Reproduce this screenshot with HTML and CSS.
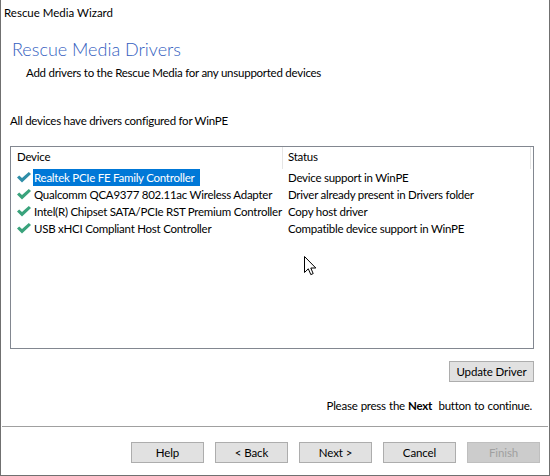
FILE: index.html
```html
<!DOCTYPE html>
<html>
<head>
<meta charset="utf-8">
<link rel="stylesheet" href="styles.css">
</head>
<body>
<div class="window">
  <div class="titlebar">Rescue Media Wizard</div>
  <h1 class="heading">Rescue Media Drivers</h1>
  <div class="subtitle">Add drivers to the Rescue Media for any unsupported devices</div>
  <div class="summary">All devices have drivers configured for WinPE</div>

  <div class="listbox">
    <div class="list-head">
      <div class="col-device">Device</div>
      <div class="col-status">Status</div>
      <div class="col-rest"></div>
    </div>
    <div class="row selected">
      <div class="col-device"><svg class="check" viewBox="0 0 14 11"><path d="M0 5.5 L2.2 3.4 L5 6 L11.8 0 L14 2.1 L5 10.5 Z"/></svg><span class="name">Realtek PCIe FE Family Controller</span></div>
      <div class="col-status">Device support in WinPE</div>
    </div>
    <div class="row">
      <div class="col-device"><svg class="check" viewBox="0 0 14 11"><path d="M0 5.5 L2.2 3.4 L5 6 L11.8 0 L14 2.1 L5 10.5 Z"/></svg><span class="name">Qualcomm QCA9377 802.11ac Wireless Adapter</span></div>
      <div class="col-status">Driver already present in Drivers folder</div>
    </div>
    <div class="row">
      <div class="col-device"><svg class="check" viewBox="0 0 14 11"><path d="M0 5.5 L2.2 3.4 L5 6 L11.8 0 L14 2.1 L5 10.5 Z"/></svg><span class="name">Intel(R) Chipset SATA/PCIe RST Premium Controller</span></div>
      <div class="col-status">Copy host driver</div>
    </div>
    <div class="row">
      <div class="col-device"><svg class="check" viewBox="0 0 14 11"><path d="M0 5.5 L2.2 3.4 L5 6 L11.8 0 L14 2.1 L5 10.5 Z"/></svg><span class="name">USB xHCI Compliant Host Controller</span></div>
      <div class="col-status">Compatible device support in WinPE</div>
    </div>
  </div>

  <div class="update-row"><button class="btn btn-update">Update Driver</button></div>
  <div class="hint">Please press the <b>Next</b>&nbsp; button to continue.</div>
  <div class="separator"></div>
  <div class="buttons">
    <button class="btn">Help</button>
    <button class="btn">&lt; Back</button>
    <button class="btn">Next &gt;</button>
    <button class="btn">Cancel</button>
    <button class="btn disabled">Finish</button>
  </div>

  <svg class="cursor" viewBox="0 0 13 20" width="13" height="20"><path d="M0.5 0.5 L0.5 16.5 L4.3 12.8 L6.8 18.6 L9.2 17.6 L6.8 12 L11.8 12 Z" fill="#fff" stroke="#000" stroke-width="1"/></svg>
</div>
</body>
</html>
```
FILE: styles.css
```css
* { box-sizing: border-box; }
html, body { margin: 0; padding: 0; background: #fff; }
body {
  width: 550px;
  height: 476px;
  overflow: hidden;
  font-family: Lato, "Noto Sans", sans-serif;
  font-size: 11.5px;
  letter-spacing: -0.25px;
  color: #000;
}
.window {
  position: relative;
  width: 550px;
  height: 476px;
  border-left: 1px solid #707070;
  border-right: 1px solid #707070;
  border-bottom: 1px solid #707070;
  display: flex;
  flex-direction: column;
}
.titlebar {
  margin-top: 5px;
  padding-left: 3px;
  line-height: 16px;
  height: 16px;
  letter-spacing: 0;
}
.heading {
  margin: 17px 0 0 11px;
  font-weight: 300;
  font-size: 18px;
  letter-spacing: 0;
  line-height: 22px;
  color: #3460c0;
}
.subtitle {
  margin-top: 5px;
  padding-left: 25px;
  line-height: 16px;
}
.summary {
  margin-top: 32px;
  padding-left: 9px;
  line-height: 16px;
}
.listbox {
  margin: 17px 0 0 9px;
  width: 524px;
  height: 203px;
  border: 1px solid #828790;
  background: #fff;
}
.list-head {
  display: flex;
  height: 22px;
  align-items: stretch;
}
.list-head > div {
  line-height: 20px;
}
.list-head .col-device {
  width: 272px;
  padding-left: 6px;
  border-right: 1px solid #e5e5e5;
}
.list-head .col-status {
  width: 248px;
  padding-left: 5px;
  border-right: 1px solid #e5e5e5;
}
.list-head .col-rest { flex: 1; }
.row {
  display: flex;
  height: 17px;
  line-height: 17px;
  white-space: nowrap;
}
.row .col-device {
  width: 273px;
  flex: none;
  padding-left: 6px;
  display: flex;
  align-items: center;
  overflow: hidden;
}
.row .col-status {
  padding-left: 4px;
}
.check {
  width: 14px;
  height: 11px;
  fill: #3aa37c;
  flex: none;
  margin-right: 2px;
}
.row.selected .check { fill: #2f8ea8; }
.name { padding: 0 1px; }
.row.selected .name {
  background: #0078d7;
  color: #fff;
  padding-right: 6px;
}
.update-row {
  margin-top: 12px;
  display: flex;
  justify-content: flex-end;
  padding-right: 15px;
}
.btn {
  font-family: inherit;
  font-size: 11.5px;
  letter-spacing: -0.1px;
  color: #000;
  background: #e1e1e1;
  border: 1px solid #adadad;
  width: 73px;
  height: 21px;
  padding: 0;
  margin: 0;
  line-height: 19px;
}
.btn-update { width: 85px; }
.btn.disabled {
  color: #a0a0a0;
  background: #cccccc;
  border-color: #bfbfbf;
}
.hint {
  margin-top: 16px;
  text-align: right;
  padding-right: 17px;
  line-height: 16px;
  word-spacing: 0.5px;
}
.hint b { font-weight: 700; }
.separator {
  margin: 12px 0 0 1px;
  height: 1px;
  width: 546px;
  background: #a0a0a0;
}
.buttons {
  margin-top: 15px;
  display: flex;
  gap: 11px;
  padding-left: 130px;
}
.cursor {
  position: absolute;
  left: 303px;
  top: 256px;
}
```
